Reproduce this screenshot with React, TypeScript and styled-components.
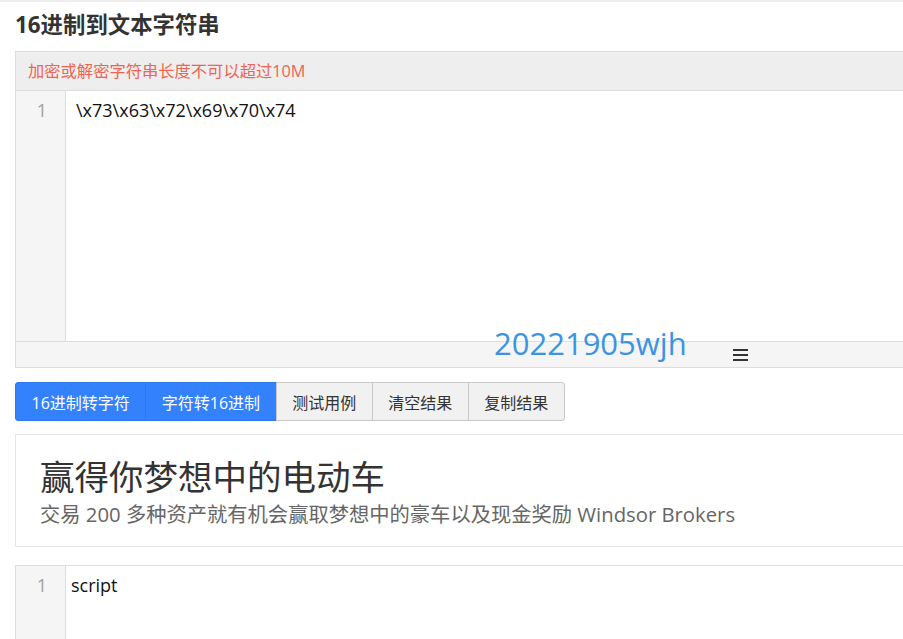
import styled, { createGlobalStyle } from 'styled-components';

const GlobalStyle = createGlobalStyle`
    body {
        margin: 0;
        overflow: hidden;
        background: #fff;
        font-family: 'Open Sans', 'Noto Sans CJK SC', sans-serif;
        color: #333;
    }
`;

const Page = styled.div`
    position: relative;
    width: 1000px;
    padding-left: 15px;
    border-top: 2px solid #eee;
`;

const Title = styled.h2`
    margin: 10px 0 0;
    height: 39px;
    font-size: 22.4px;
    line-height: 26px;
    font-weight: bold;
    color: #333;
`;

const Panel = styled.div<{ $top?: number }>`
    border: 1px solid #ddd;
    margin-top: ${(p) => p.$top || 0}px;
`;

const PanelHeader = styled.div`
    height: 38px;
    line-height: 38px;
    padding-left: 12px;
    background: #eee;
    border-bottom: 1px solid #ddd;
    color: #ef6452;
    font-size: 16.3px;
`;

const Editor = styled.div<{ $height: number }>`
    display: flex;
    height: ${(p) => p.$height}px;
`;

const Gutter = styled.div`
    width: 50px;
    flex: none;
    background: #f5f5f5;
    border-right: 1px solid #ddd;
    color: #a0a0a0;
    font-size: 18px;
    line-height: 24px;
    padding-top: 7px;
    padding-right: 18px;
    box-sizing: border-box;
    text-align: right;
`;

const Code = styled.div<{ $pad: number }>`
    padding: 7px 0 0 ${(p) => p.$pad}px;
    font-size: 18px;
    line-height: 24px;
    color: #111;
`;

const PanelFooter = styled.div`
    height: 25px;
    background: #f5f5f5;
    border-top: 1px solid #ddd;
    display: flex;
    align-items: center;
    padding-left: 717px;
`;

const Burger = styled.div`
    width: 15px;
    display: flex;
    flex-direction: column;
    gap: 3px;
    margin-top: 1px;

    span {
        display: block;
        height: 2px;
        background: #333;
    }
`;

const Watermark = styled.div`
    position: absolute;
    left: 494px;
    top: 321px;
    font-size: 31px;
    color: #3b94e3;
    line-height: 40px;
`;

const ButtonRow = styled.div`
    display: flex;
    margin-top: 14px;
`;

const Btn = styled.button<{ $primary?: boolean }>`
    height: 39px;
    padding: 0 15.5px;
    font-family: inherit;
    font-size: 16px;
    cursor: pointer;
    margin-left: -1px;
    border: 1px solid ${(p) => (p.$primary ? '#2f78f0' : '#c8c8c8')};
    background: ${(p) => (p.$primary ? '#3381fd' : '#f1f1f1')};
    color: ${(p) => (p.$primary ? '#fff' : '#333')};

    &:first-child {
        margin-left: 0;
        border-radius: 3px 0 0 3px;
    }
    &:last-child {
        border-radius: 0 3px 3px 0;
    }
`;

const Ad = styled.div`
    margin-top: 13px;
    height: 113px;
    box-sizing: border-box;
    border: 1px solid #e5e5e5;
    padding: 20px 24px;
`;

const AdTitle = styled.div`
    font-size: 34.5px;
    line-height: 44px;
    color: #333;
`;

const AdText = styled.div`
    font-size: 20.3px;
    line-height: 30px;
    color: #666;
`;

const buttons = ['16进制转字符', '字符转16进制', '测试用例', '清空结果', '复制结果'];

const App: React.FC = (): JSX.Element => {
    return (
        <>
            <GlobalStyle />
            <Page>
                <Title>16进制到文本字符串</Title>
                <Panel>
                    <PanelHeader>加密或解密字符串长度不可以超过10M</PanelHeader>
                    <Editor $height={250}>
                        <Gutter>1</Gutter>
                        <Code $pad={10}>\x73\x63\x72\x69\x70\x74</Code>
                    </Editor>
                    <PanelFooter>
                        <Burger>
                            <span />
                            <span />
                            <span />
                        </Burger>
                    </PanelFooter>
                </Panel>
                <Watermark>20221905wjh</Watermark>
                <ButtonRow>
                    {buttons.map((b, i) => (
                        <Btn key={b} $primary={i < 2}>
                            {b}
                        </Btn>
                    ))}
                </ButtonRow>
                <Ad>
                    <AdTitle>赢得你梦想中的电动车</AdTitle>
                    <AdText>交易 200 多种资产就有机会赢取梦想中的豪车以及现金奖励 Windsor Brokers</AdText>
                </Ad>
                <Panel $top={18}>
                    <Editor $height={120}>
                        <Gutter>1</Gutter>
                        <Code $pad={5}>script</Code>
                    </Editor>
                </Panel>
            </Page>
        </>
    );
};

export default App;
